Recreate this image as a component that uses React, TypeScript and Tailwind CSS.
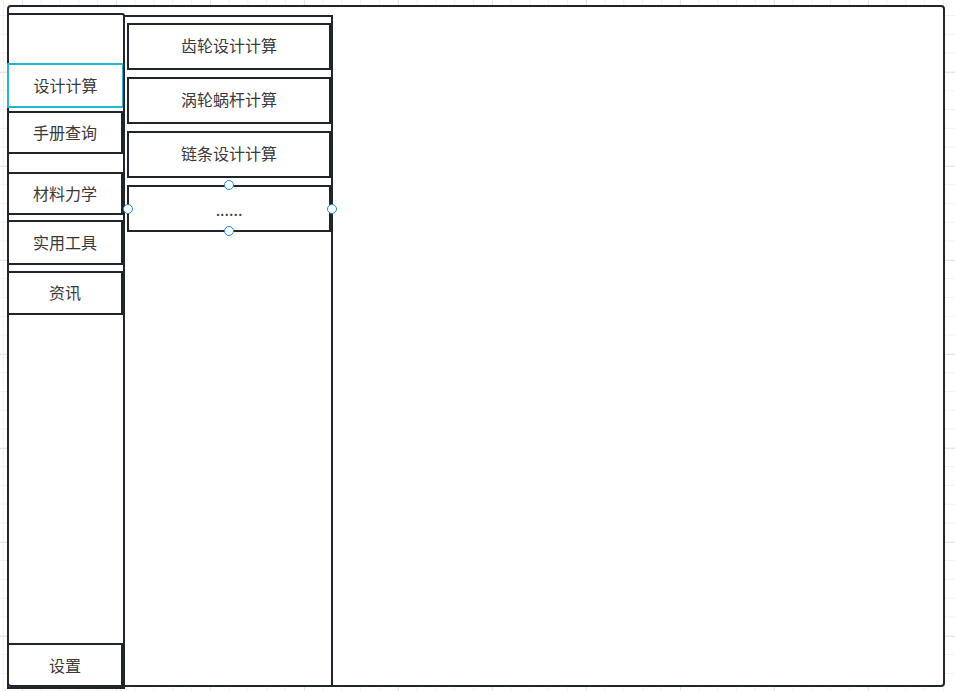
const frame = 'border-[#1f252b]';

function SideItem({ label, className }: { label: string; className: string }) {
  return (
    <div
      className={`-ml-[2px] w-[116px] shrink-0 flex items-center justify-center border-2 pb-[2px] text-[16px] text-[#3a3a3a] ${className}`}
    >
      {label}
    </div>
  );
}

function Handle({ className }: { className: string }) {
  return (
    <span
      className={`absolute w-[10px] h-[10px] rounded-full border border-[#1f86f0] bg-white ${className}`}
    />
  );
}

export default function App() {
  const subItems = ['齿轮设计计算', '涡轮蜗杆计算', '链条设计计算'];

  return (
    <div
      className="min-h-screen w-full bg-white pt-[5px] pl-[7px] bg-[linear-gradient(to_right,#e6e6e6_1px,transparent_1px),linear-gradient(to_bottom,#e6e6e6_1px,transparent_1px),linear-gradient(to_right,#f1f1f1_1px,transparent_1px),linear-gradient(to_bottom,#f1f1f1_1px,transparent_1px)] bg-[size:94px_94px,94px_94px,18.8px_18.8px,18.8px_18.8px] bg-[position:22px_0,0_72px,3px_0,0_15px]"
      style={{ fontFamily: '"Noto Sans CJK SC", "Noto Sans", sans-serif' }}
    >
      <div className={`w-[938px] h-[682px] border-2 ${frame} rounded-[4px] bg-white flex items-start`}>
        {/* left menu */}
        <div
          className={`-ml-[2px] mt-[6px] w-[118px] h-[676px] shrink-0 border-2 ${frame} rounded-tr-[3px] flex flex-col`}
        >
          <SideItem label="设计计算" className="mt-[48px] h-[45px] w-[117px] border-[#1fb8d0]" />
          <SideItem label="手册查询" className={`mt-[3px] h-[43px] ${frame}`} />
          <SideItem label="材料力学" className={`mt-[18px] h-[43px] ${frame}`} />
          <SideItem label="实用工具" className={`mt-[5px] h-[45px] ${frame}`} />
          <SideItem label="资讯" className={`mt-[6px] h-[44px] ${frame}`} />
          <SideItem label="设置" className={`mt-auto -mb-[2px] h-[46px] ${frame}`} />
        </div>

        {/* sub menu */}
        <div
          className={`-ml-[2px] mt-[8px] w-[210px] h-[672px] shrink-0 border-2 ${frame} flex flex-col gap-[7px] pl-[2px] pt-[6px]`}
        >
          {subItems.map((s) => (
            <div
              key={s}
              className={`h-[47px] shrink-0 border-2 ${frame} flex items-center justify-center pb-[3px] text-[16px] text-[#3a3a3a]`}
            >
              {s}
            </div>
          ))}
          <div
            className={`relative h-[47px] shrink-0 border-2 ${frame} flex items-center justify-center text-[16px] text-[#3a3a3a]`}
          >
            <span className="pt-[1px]">......</span>
            <Handle className="top-[-2px] left-1/2 -translate-x-1/2 -translate-y-1/2" />
            <Handle className="bottom-[-1px] left-1/2 -translate-x-1/2 translate-y-1/2" />
            <Handle className="left-[-1px] top-1/2 -translate-x-1/2 -translate-y-1/2" />
            <Handle className="right-[-3px] top-1/2 translate-x-1/2 -translate-y-1/2" />
          </div>
        </div>
      </div>
    </div>
  );
}
